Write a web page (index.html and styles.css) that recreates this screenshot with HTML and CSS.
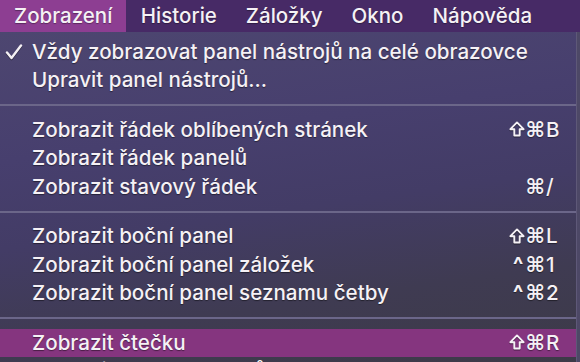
FILE: index.html
```html
<!DOCTYPE html>
<html lang="cs">
<head>
<meta charset="utf-8">
<title>Zobrazení</title>
<link rel="stylesheet" href="styles.css">
</head>
<body>
<div class="screen">
  <nav class="menubar">
    <span class="mb-item active">Zobrazení</span>
    <span class="mb-item">Historie</span>
    <span class="mb-item">Záložky</span>
    <span class="mb-item">Okno</span>
    <span class="mb-item">Nápověda</span>
  </nav>
  <div class="menu">
    <div class="item">
      <span class="check"><svg width="18" height="16" viewBox="0 0 18 16"><path d="M2 8.5 L6.5 14 L16 1.5" fill="none" stroke="#f4f0f4" stroke-width="2.4" stroke-linecap="round" stroke-linejoin="round"/></svg></span>
      <span class="label">Vždy zobrazovat panel nástrojů na celé obrazovce</span>
    </div>
    <div class="item"><span class="check"></span><span class="label">Upravit panel nástrojů…</span></div>
    <div class="sep"></div>
    <div class="item"><span class="check"></span><span class="label">Zobrazit řádek oblíbených stránek</span><span class="keys"><svg class="shift" width="16" height="16" viewBox="0 0 16 16"><path d="M8 1.4 L14.6 8.2 L10.7 8.2 L10.7 14.5 L5.3 14.5 L5.3 8.2 L1.4 8.2 Z" fill="none" stroke="#f5f1f5" stroke-width="1.9" stroke-linejoin="round"/></svg><span class="mods">⌘</span><span class="key">B</span></span></div>
    <div class="item"><span class="check"></span><span class="label">Zobrazit řádek panelů</span></div>
    <div class="item"><span class="check"></span><span class="label">Zobrazit stavový řádek</span><span class="keys"><span class="mods">⌘</span><span class="key">/</span></span></div>
    <div class="sep"></div>
    <div class="item"><span class="check"></span><span class="label">Zobrazit boční panel</span><span class="keys"><svg class="shift" width="16" height="16" viewBox="0 0 16 16"><path d="M8 1.4 L14.6 8.2 L10.7 8.2 L10.7 14.5 L5.3 14.5 L5.3 8.2 L1.4 8.2 Z" fill="none" stroke="#f5f1f5" stroke-width="1.9" stroke-linejoin="round"/></svg><span class="mods">⌘</span><span class="key">L</span></span></div>
    <div class="item"><span class="check"></span><span class="label">Zobrazit boční panel záložek</span><span class="keys"><span class="ctrl">^</span><span class="mods">⌘</span><span class="key">1</span></span></div>
    <div class="item"><span class="check"></span><span class="label">Zobrazit boční panel seznamu četby</span><span class="keys"><span class="ctrl">^</span><span class="mods">⌘</span><span class="key">2</span></span></div>
    <div class="sep"></div>
    <div class="item selected"><span class="check"></span><span class="label">Zobrazit čtečku</span><span class="keys"><svg class="shift" width="16" height="16" viewBox="0 0 16 16"><path d="M8 1.4 L14.6 8.2 L10.7 8.2 L10.7 14.5 L5.3 14.5 L5.3 8.2 L1.4 8.2 Z" fill="none" stroke="#f5f1f5" stroke-width="1.9" stroke-linejoin="round"/></svg><span class="mods">⌘</span><span class="key">R</span></span></div>
    <div class="item"><span class="check"></span><span class="label">Zobrazit přehled panelů</span><span class="keys"><svg class="shift" width="16" height="16" viewBox="0 0 16 16"><path d="M8 1.4 L14.6 8.2 L10.7 8.2 L10.7 14.5 L5.3 14.5 L5.3 8.2 L1.4 8.2 Z" fill="none" stroke="#f5f1f5" stroke-width="1.9" stroke-linejoin="round"/></svg><span class="mods">⌘</span><span class="key">\</span></span></div>
  </div>
</div>
</body>
</html>
```

FILE: styles.css
```css
html, body {
  margin: 0;
  padding: 0;
}

body {
  width: 580px;
  height: 362px;
  overflow: hidden;
  background: #4d4866;
  font-family: "Inter", "Noto Sans", sans-serif;
  color: #f5f1f5;
}

.screen {
  display: flex;
  flex-direction: column;
  height: 362px;
  overflow: hidden;
}

.menubar {
  display: flex;
  align-items: stretch;
  height: 32px;
  flex-shrink: 0;
  background: #472a66;
  font-size: 20.5px;
  font-weight: 500;
  line-height: 32px;
}

.mb-item {
  padding: 0 14.5px;
  text-shadow: 0 1px 1px rgba(0, 0, 0, 0.35);
}

.mb-item:first-child {
  padding-left: 14px;
  padding-right: 14px;
}

.mb-item.active {
  background: #8d3e92;
}

.menu {
  width: 576px;
  border-right: 1px solid #5e5878;
  padding-top: 5.5px;
  flex: 1;
  background: linear-gradient(172deg, #4d4670 0%, #473f6e 30%, #433c66 50%, #3f3b52 72%, #3c3a45 100%);
  font-size: 20.6px;
  font-weight: 500;
}

.item {
  display: flex;
  align-items: center;
  height: 28.5px;
  line-height: 28.5px;
  padding-right: 13px;
  text-shadow: 0 1px 1px rgba(0, 0, 0, 0.45);
  white-space: nowrap;
}

.item.selected {
  background: #85357f;
}

.check {
  width: 32px;
  flex-shrink: 0;
  display: flex;
  align-items: center;
  padding-left: 5px;
  box-sizing: border-box;
}

.check svg {
  display: block;
  filter: drop-shadow(0 1px 0.5px rgba(0, 0, 0, 0.45));
}

.label {
  flex: 1;
}

.keys {
  display: flex;
  align-items: center;
}

.shift {
  display: block;
  margin-right: 1px;
  margin-top: -1px;
  filter: drop-shadow(0 1px 0.5px rgba(0, 0, 0, 0.45));
}

.ctrl {
  font-weight: 700;
  font-size: 22px;
  margin-right: 2px;
}

.mods {
  font-family: "DejaVu Sans", sans-serif;
  font-weight: bold;
  font-size: 21px;
}

.key {
  width: 17px;
  padding-left: 1px;
}

.sep {
  height: 21px;
  display: flex;
  align-items: center;
}

.sep::before {
  content: "";
  display: block;
  width: 100%;
  height: 2px;
  background: #6b6689;
}
```
